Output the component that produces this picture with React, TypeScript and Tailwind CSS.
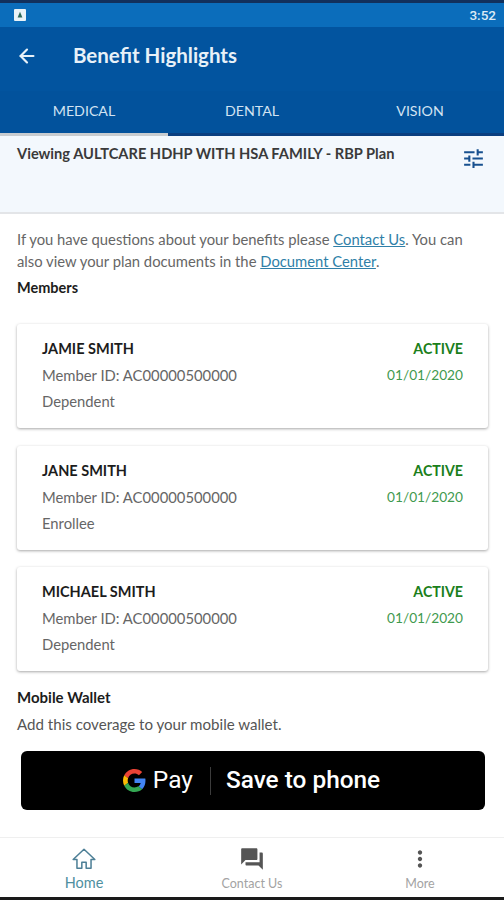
import React from 'react';
import { ArrowLeft } from 'lucide-react';

const members = [
  { name: 'JAMIE SMITH', role: 'Dependent' },
  { name: 'JANE SMITH', role: 'Enrollee' },
  { name: 'MICHAEL SMITH', role: 'Dependent' },
];

const MemberCard: React.FC<{ name: string; role: string }> = ({ name, role }) => (
  <div className="flex h-[104px] w-[471px] justify-between rounded-[3px] bg-white px-[25px] pt-[12px] leading-[26px] shadow-[0_1px_3px_rgba(0,0,0,0.35)]">
    <div>
      <div className="text-[14.5px] font-bold text-[#1c1c1c]">{name}</div>
      <div className="text-[14.8px] text-[#666]">Member ID: AC00000500000</div>
      <div className="text-[14.8px] text-[#666]">{role}</div>
    </div>
    <div className="text-right">
      <div className="text-[14.2px] font-bold text-[#1b7f1b]">ACTIVE</div>
      <div className="text-[13.7px] text-[#3f9a4f]">01/01/2020</div>
    </div>
  </div>
);

const GoogleG = () => (
  <svg viewBox="0 0 48 48" className="h-[23px] w-[23px]">
    <path fill="#EA4335" d="M24 9.500c3.500 0 6.700 1.200 9.200 3.600l6.900-6.900C35.900 2.400 30.500 0 24 0 14.600 0 6.500 5.400 2.600 13.200l8 6.200C12.500 13.700 17.800 9.500 24 9.500z" />
    <path fill="#4285F4" d="M46.900 24.500c0-1.600-.1-3.100-.4-4.500H24v9h12.900c-.6 3-2.200 5.500-4.700 7.200l7.700 6c4.500-4.200 7-10.300 7-17.700z" />
    <path fill="#FBBC05" d="M10.600 28.600c-.5-1.400-.8-3-.8-4.600s.3-3.200.8-4.600l-8-6.200C.9 16.500 0 20.100 0 24s.9 7.500 2.600 10.800l8-6.200z" />
    <path fill="#34A853" d="M24 48c6.500 0 11.900-2.100 15.900-5.800l-7.700-6c-2.200 1.400-4.900 2.300-8.200 2.300-6.200 0-11.500-4.200-13.400-9.900l-8 6.200C6.500 42.600 14.600 48 24 48z" />
  </svg>
);

export default function App() {
  return (
    <div className="flex h-[900px] w-[504px] flex-col overflow-hidden bg-white font-['Lato','Open_Sans',sans-serif]">
      <div className="h-[3px] bg-[#12305c]" />
      {/* status bar */}
      <div className="flex h-[24px] items-center justify-between bg-[#0b6dbb] pl-[14px] pr-[8px]">
        <div className="flex h-[12px] w-[12px] items-center justify-center rounded-[1px] bg-[#eaf3f8]">
          <svg viewBox="0 0 10 10" className="h-[8px] w-[8px]">
            <path fill="#2d6a5a" d="M5 1 8 8H2z" />
          </svg>
        </div>
        <span className="font-['Roboto',sans-serif] text-[13.5px] font-medium text-[#dceaf5]">3:52</span>
      </div>
      {/* app bar */}
      <div className="flex h-[64px] items-center bg-[#02549f] pb-[7px] pl-[16px]">
        <ArrowLeft className="h-[22px] w-[22px] text-[#e8f1f8]" strokeWidth={2.4} />
        <h1 className="ml-[35px] text-[20.5px] font-bold text-[#e8f1f8]">Benefit Highlights</h1>
      </div>
      {/* tabs */}
      <div className="flex h-[45px] bg-[#02529c] text-[14.2px] text-[#d3e3f2]">
        <div className="flex flex-1 items-center justify-center border-b-[3px] border-[#c8ccd0] pb-[2px]">MEDICAL</div>
        <div className="flex flex-1 items-center justify-center border-b-[3px] border-[#0a3f80] pb-[2px]">DENTAL</div>
        <div className="flex flex-1 items-center justify-center border-b-[3px] border-[#0a3f80] pb-[2px]">VISION</div>
      </div>
      {/* plan */}
      <div className="flex h-[78px] justify-between border-b-2 border-[#e3e5e8] bg-[#f3f8fd] pl-[17px] pr-[18px] pt-[8px]">
        <div className="text-[14.65px] leading-[20px] font-bold text-[#3a3a3a]">Viewing AULTCARE HDHP WITH HSA FAMILY - RBP Plan</div>
        <svg viewBox="0 0 24 24" className="mt-[2px] h-[25px] w-[25px]">
          <path
            fill="#17508f"
            d="M3 17v2h6v-2H3zM3 5v2h10V5H3zm10 16v-2h8v-2h-8v-2h-2v6h2zM7 9v2H3v2h4v2h2V9H7zm14 4v-2H11v2h10zm-6-4h2V7h4V5h-4V3h-2v6z"
          />
        </svg>
      </div>
      <div className="flex flex-1 flex-col pl-[17px]">
        <p className="mt-[14px] w-[470px] text-[14.8px] leading-[22px] text-[#666]">
          If you have questions about your benefits please <a className="text-[#2f7fa8] underline">Contact Us</a>. You can also view your plan documents in the <a className="text-[#2f7fa8] underline">Document Center</a>.
        </p>
        <div className="mt-[6px] text-[14.5px] leading-[20px] font-bold text-[#1c1c1c]">Members</div>
        <div className="mt-[26px] flex flex-col gap-[17.5px]">
          {members.map(m => (
            <MemberCard key={m.name} name={m.name} role={m.role} />
          ))}
        </div>
        <div className="mt-[16px] text-[15px] leading-[20px] font-bold text-[#1c1c1c]">Mobile Wallet</div>
        <div className="mt-[7px] text-[15.1px] leading-[20px] text-[#555]">Add this coverage to your mobile wallet.</div>
        <div className="ml-[4px] mt-[17px] flex h-[59px] w-[464px] items-center justify-center rounded-[6px] bg-black pr-[3px] text-white">
          <GoogleG />
          <span className="ml-[7px] font-['Roboto',sans-serif] text-[24.5px] leading-none">Pay</span>
          <div className="ml-[17px] mr-[15px] h-[28px] w-px bg-[#3c3c3c]" />
          <span className="font-['Roboto',sans-serif] text-[24.4px] font-medium leading-none">Save to phone</span>
        </div>
      </div>
      {/* bottom nav */}
      <div className="flex h-[60px] border-t border-[#efefef] bg-white">
        <div className="flex flex-1 flex-col items-center pt-[8px]">
          <svg viewBox="0 0 24 24" className="h-[26px] w-[26px]" fill="none" stroke="#4d7f96" strokeWidth="1.400" strokeLinejoin="round">
            <path d="M2 12.500 12 3l10 9.500h-3.500V20.500h-4.500V15h-4v5.500H5.500V12.500z" />
          </svg>
          <span className="mt-[2px] text-[14.5px] leading-[18px] text-[#4f8fa0]">Home</span>
        </div>
        <div className="flex flex-1 flex-col items-center pt-[8px]">
          <svg viewBox="0 0 24 24" className="h-[26px] w-[26px]">
            <path
              fill="#555"
              d="M21 6h-2v9H6v2c0 .55.45 1 1 1h11l4 4V7c0-.55-.45-1-1-1zm-4 6V3c0-.55-.45-1-1-1H3c-.55 0-1 .45-1 1v14l4-4h10c.55 0 1-.45 1-1z"
            />
          </svg>
          <span className="mt-[3px] text-[12.5px] leading-[18px] text-[#a3a3a3]">Contact Us</span>
        </div>
        <div className="flex flex-1 flex-col items-center pt-[8px]">
          <svg viewBox="0 0 24 24" className="h-[26px] w-[26px]">
            <path
              fill="#555"
              d="M12 8c1.100 0 2-.9 2-2s-.9-2-2-2-2 .9-2 2 .9 2 2 2zm0 2c-1.100 0-2 .9-2 2s.9 2 2 2 2-.9 2-2-.9-2-2-2zm0 6c-1.100 0-2 .9-2 2s.9 2 2 2 2-.9 2-2-.9-2-2-2z"
            />
          </svg>
          <span className="mt-[3px] text-[12.5px] leading-[18px] text-[#a3a3a3]">More</span>
        </div>
      </div>
      <div className="h-[3px] bg-[#1a1a1a]" />
    </div>
  );
}
